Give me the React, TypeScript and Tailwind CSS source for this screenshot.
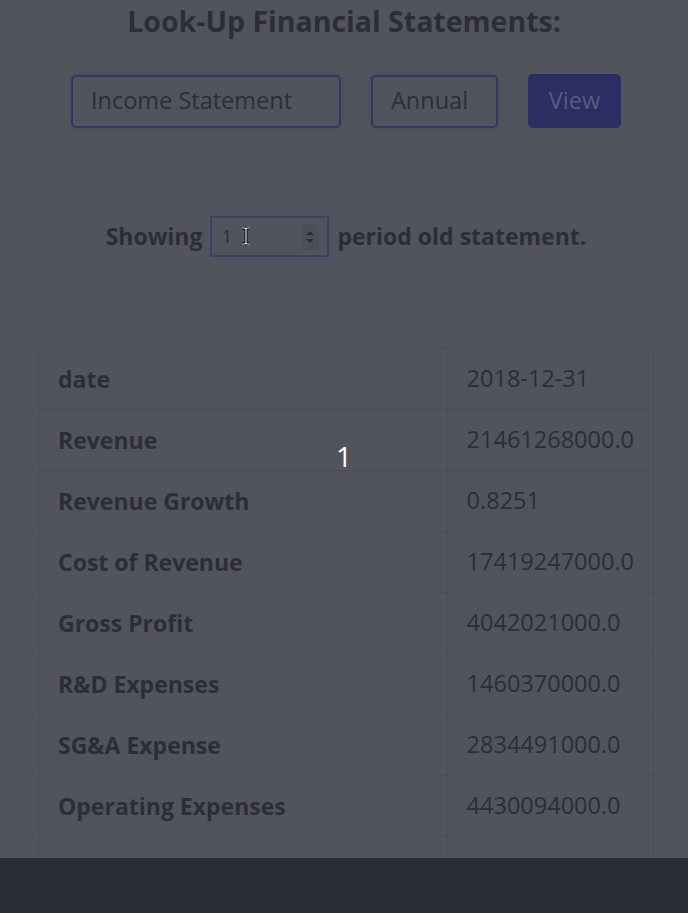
const rows: [string, string][] = [
  ["date", "2018-12-31"],
  ["Revenue", "21461268000.0"],
  ["Revenue Growth", "0.8251"],
  ["Cost of Revenue", "17419247000.0"],
  ["Gross Profit", "4042021000.0"],
  ["R&D Expenses", "1460370000.0"],
  ["SG&A Expense", "2834491000.0"],
  ["Operating Expenses", "4430094000.0"],
  ["Operating Income", "-388073000.0"],
];

function Spinner() {
  return (
    <svg width="12" height="18" viewBox="0 0 12 18" className="text-[#2b2e38]">
      <path d="M2 7 L6 3 L10 7 Z" fill="currentColor" />
      <path d="M2 11 L6 15 L10 11 Z" fill="currentColor" />
    </svg>
  );
}

function IBeam() {
  return (
    <svg width="10" height="18" viewBox="0 0 10 18" className="absolute left-[241px] top-[227px]">
      <path d="M1 1 H4 L5 2 L6 1 H9 M5 2 V16 M1 17 H4 L5 16 L6 17 H9" stroke="#000" strokeWidth="3" fill="none" />
      <path d="M1 1 H4 L5 2 L6 1 H9 M5 2 V16 M1 17 H4 L5 16 L6 17 H9" stroke="#e5e5e5" strokeWidth="1.2" fill="none" />
    </svg>
  );
}

export default function App() {
  return (
    <div className="relative flex h-[913px] w-[688px] flex-col overflow-hidden bg-[#51545d] font-['Open_Sans',sans-serif] text-[#2b2e38]">
      <main className="h-[858px] overflow-hidden">
        <h1 className="mt-[2px] text-center text-[28.5px] font-bold leading-[38px]">
          Look-Up Financial Statements:
        </h1>

        <div className="mt-[34px] flex items-center justify-center gap-[30px] pl-[4px]">
          <select className="h-[53px] w-[270px] appearance-none rounded-[5px] border-2 border-[#34375f] bg-transparent px-[18px] text-[23.5px] text-[#2b2e38] shadow-[0_0_3px_rgba(60,64,110,0.6)] outline-none">
            <option>Income Statement</option>
          </select>
          <select className="h-[53px] w-[127px] appearance-none rounded-[5px] border-2 border-[#34375f] bg-transparent px-[18px] text-[23.5px] text-[#2b2e38] shadow-[0_0_3px_rgba(60,64,110,0.6)] outline-none">
            <option>Annual</option>
          </select>
          <button className="h-[54px] w-[93px] rounded-[5px] bg-[#2c2d62] text-[23.5px] text-[#595b7c]">
            View
          </button>
        </div>

        <div className="mt-[88px] flex items-center justify-center gap-[8px] pl-[4px] text-[23px] font-bold">
          <span>Showing</span>
          <div className="flex h-[41px] w-[119px] items-center border-2 border-[#3b4364] pl-[9px] pr-[8px]">
            <input
              type="text"
              defaultValue="1"
              className="w-full bg-transparent text-[19px] font-normal text-[#2b2e38] outline-none"
            />
            <div className="flex h-[26px] w-[22px] items-center justify-center bg-[#4c4f58]">
              <Spinner />
            </div>
          </div>
          <span>period old statement.</span>
        </div>
        <IBeam />

        <table className="ml-[38px] mt-[91px] w-[616px] border-collapse">
          <tbody>
            {rows.map(([label, value]) => (
              <tr key={label} className="h-[61px]">
                <td className="w-[409px] border border-[#4a4d56] px-[19px] text-[23px] font-bold">
                  {label}
                </td>
                <td className="border border-[#4a4d56] px-[19px] text-[23.5px]">{value}</td>
              </tr>
            ))}
          </tbody>
        </table>
      </main>

      <footer className="h-[55px] bg-[#292c35]" />

      <div className="absolute left-[336px] top-[438px] text-[28px] leading-[36px] text-white">1</div>
    </div>
  );
}
